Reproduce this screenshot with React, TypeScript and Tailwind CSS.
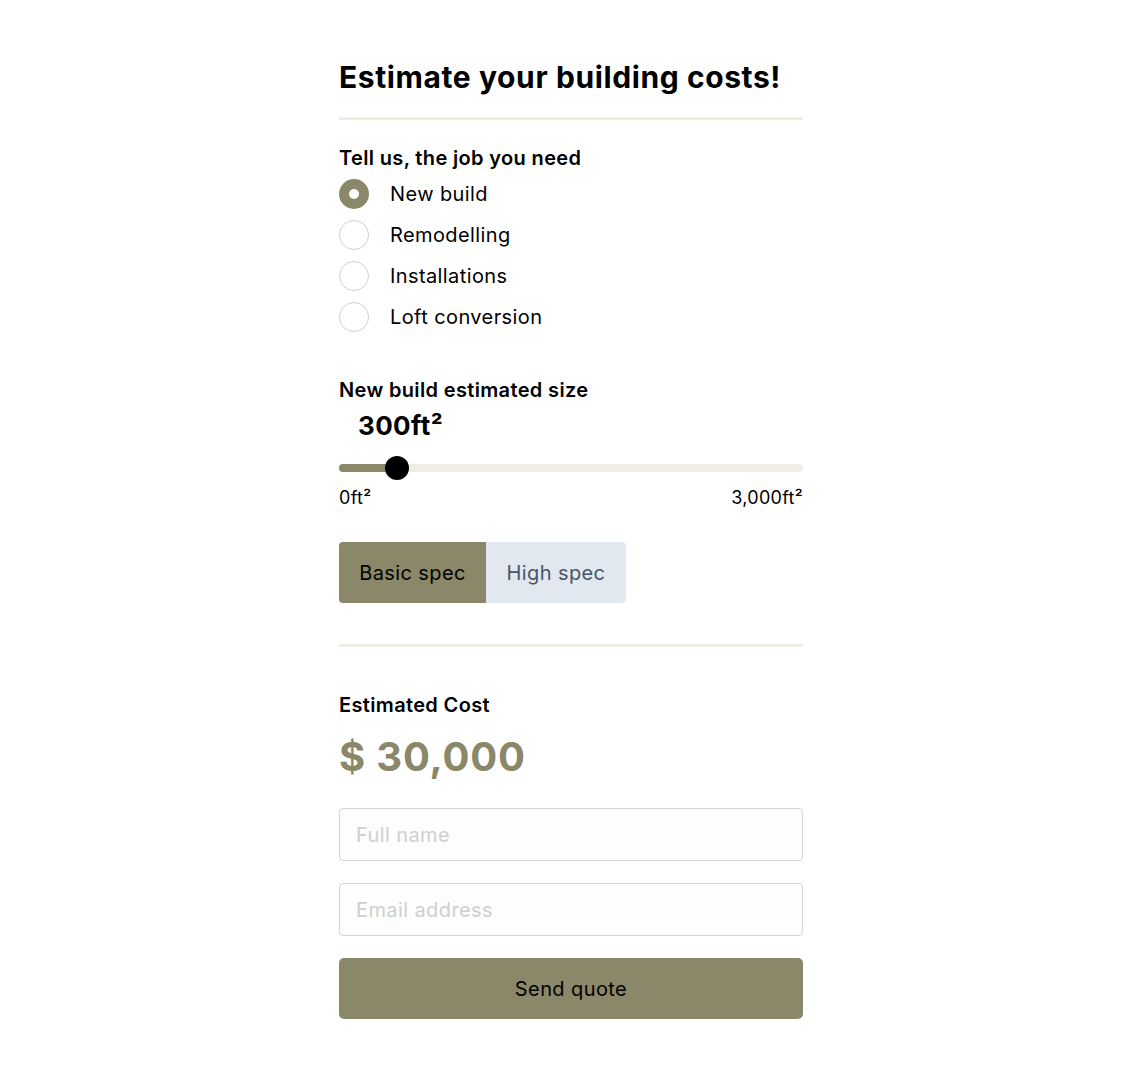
import React from "react";

const OLIVE = "#8b8769";

export default function App() {
  const options = ["New build", "Remodelling", "Installations", "Loft conversion"];
  return (
    <div className="min-h-screen bg-white pr-[3px]" style={{ fontFamily: "Inter, 'Noto Sans', sans-serif" }}>
      <div className="mx-auto w-[464px] pt-[59px] pb-[60px] text-black">
        <h1 className="text-[30px] leading-[36px] font-bold tracking-[0.6px]">Estimate your building costs!</h1>
        <div className="mt-[22px] h-[3px] bg-[#f0eee4]" />

        <div className="mt-[24px] text-[20px] leading-[28px] font-semibold tracking-[0.35px]">Tell us, the job you need</div>
        <div className="mt-[7px] flex flex-col gap-[11px]">
          {options.map((o, i) => (
            <label key={o} className="flex items-center gap-[21px] h-[30px]">
              {i === 0 ? (
                <span className="w-[30px] h-[30px] rounded-full bg-[#8b8769] flex items-center justify-center">
                  <span className="w-[10px] h-[10px] rounded-full bg-white" />
                </span>
              ) : (
                <span className="w-[30px] h-[30px] rounded-full border border-[#d0d0d0] bg-white" />
              )}
              <span className="text-[20px] leading-[28px] tracking-[0.4px]">{o}</span>
            </label>
          ))}
        </div>

        <div className="mt-[44px] text-[20px] leading-[28px] font-semibold tracking-[0.35px]">New build estimated size</div>
        <div className="mt-[6px] pl-[19px] text-[26px] leading-[32px] font-bold tracking-[0.4px]">300ft²</div>
        <div className="mt-[14px] relative h-[24px] flex items-center">
          <div className="w-full h-[8px] rounded-full bg-[#f0eee4] overflow-hidden">
            <div className="h-full bg-[#8b8769]" style={{ width: "58px" }} />
          </div>
          <div className="absolute top-0 left-[46px] w-[24px] h-[24px] rounded-full bg-black" />
        </div>
        <div className="mt-[6px] flex justify-between text-[18px] leading-[24px] tracking-[0.3px]">
          <span>0ft²</span>
          <span>3,000ft²</span>
        </div>

        <div className="mt-[32px] flex">
          <button className="w-[147px] h-[61px] rounded-l-[4px] text-[20px] tracking-[0.4px] text-black" style={{ backgroundColor: OLIVE }}>
            Basic spec
          </button>
          <button className="w-[140px] h-[61px] rounded-r-[4px] bg-[#e2e8f0] text-[20px] tracking-[0.4px] text-[#475569]">
            High spec
          </button>
        </div>

        <div className="mt-[41px] h-[3px] bg-[#f0eee4]" />

        <div className="mt-[44px] text-[20px] leading-[28px] font-semibold tracking-[0.35px]">Estimated Cost</div>
        <div className="mt-[14px] text-[40px] leading-[48px] font-bold tracking-[0.8px] text-[#8b8769]">$ 30,000</div>

        <input
          className="mt-[27px] block w-full h-[53px] rounded-[4px] border border-[#d4d4d4] bg-[#fdfdfd] px-[16px] text-[20px] tracking-[0.4px] placeholder:text-[#cfcfcf] outline-none"
          placeholder="Full name"
        />
        <input
          className="mt-[22px] block w-full h-[53px] rounded-[4px] border border-[#d4d4d4] bg-[#fdfdfd] px-[16px] text-[20px] tracking-[0.4px] placeholder:text-[#cfcfcf] outline-none"
          placeholder="Email address"
        />
        <button
          className="mt-[22px] block w-full h-[61px] rounded-[5px] text-[20px] tracking-[0.4px] text-black"
          style={{ backgroundColor: OLIVE }}
        >
          Send quote
        </button>
      </div>
    </div>
  );
}
